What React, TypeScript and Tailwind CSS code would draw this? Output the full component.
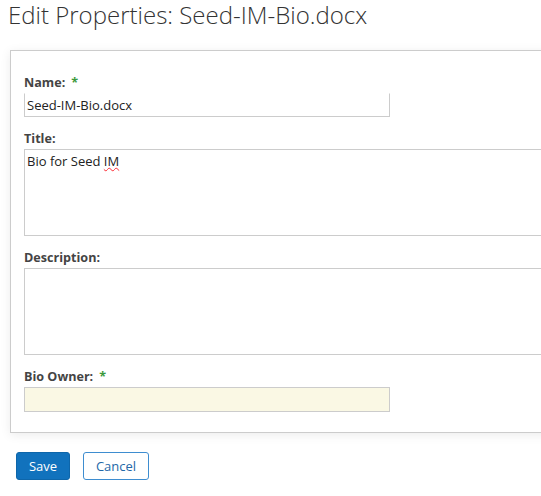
import React from "react";

function Label({ text, required }: { text: string; required?: boolean }) {
  return (
    <div className="h-[18px] text-[12.6px] leading-[18px] font-bold text-[#444] mb-px">
      {text}
      {required && <span className="ml-[6px] text-[#3c9a3c]">*</span>}
    </div>
  );
}

export default function App() {
  return (
    <div className="w-[541px] h-[496px] bg-white overflow-hidden font-['Open_Sans',sans-serif] relative">
      <h1 className="pl-[8px] pt-[0px] text-[24px] leading-[30px] font-light text-[#333] whitespace-nowrap">
        Edit Properties: Seed-IM-Bio.docx
      </h1>
      <div className="ml-[10px] mt-[20px] w-[580px] border border-[#cccccc] shadow-[0_2px_10px_rgba(0,0,0,0.08)] pl-[13px] pt-[23px] pb-[20px]">
        <Label text="Name:" required />
        <div className="w-[366px] h-[24px] border border-[#cccccc] border-t-white pl-[2px] text-[13px] leading-[22px] text-[#222]">
          Seed-IM-Bio.docx
        </div>
        <div className="mt-[13px]">
          <Label text="Title:" />
          <div className="w-[560px] h-[87px] border border-[#cccccc] pl-[2px] pt-[2px] text-[13px] leading-[18px] text-[#222]">
            Bio for Seed{" "}
            <span className="underline decoration-wavy decoration-red-500 decoration-1">IM</span>
          </div>
        </div>
        <div className="mt-[13px]">
          <Label text="Description:" />
          <div className="w-[560px] h-[87px] border border-[#cccccc]" />
        </div>
        <div className="mt-[13px]">
          <Label text="Bio Owner:" required />
          <div className="w-[366px] h-[25px] border border-[#cccccc] bg-[#faf8e4]" />
        </div>
      </div>
      <div className="flex gap-[13px] pl-[16px] mt-[19px]">
        <button className="w-[54px] h-[28px] rounded-[3px] bg-[#1172bd] border border-[#0e66aa] text-white text-[13px] leading-[26px]">
          Save
        </button>
        <button className="w-[66px] h-[28px] rounded-[3px] bg-white border border-[#3e8dd0] text-[#2468a8] text-[13px] leading-[26px]">
          Cancel
        </button>
      </div>
    </div>
  );
}
